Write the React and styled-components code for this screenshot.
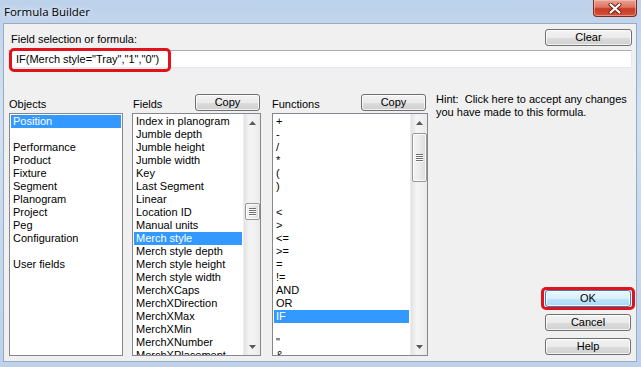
import React from 'react';
import styled, { createGlobalStyle } from 'styled-components';

const Global = createGlobalStyle`
  html, body { margin: 0; padding: 0; background: #c7d9ee; }
  body { width: 641px; height: 367px; overflow: hidden; }
  * { box-sizing: border-box; }
`;

const Window = styled.div`
  width: 641px;
  height: 367px;
  display: flex;
  flex-direction: column;
  padding: 0 4px 5px 3px;
  background: linear-gradient(180deg, #bcd1ea 0%, #d3e2f3 30%, #c6d9ee 60%, #bdd2ea 100%);
  font-family: "Liberation Sans", Arial, sans-serif;
  font-size: 11px;
  color: #000;
`;

const TitleBar = styled.div`
  height: 23px;
  flex: 0 0 23px;
  display: flex;
  align-items: flex-start;
  justify-content: space-between;
`;

const Title = styled.div`
  font-family: "Open Sans", "Noto Sans", sans-serif;
  font-size: 11.5px;
  line-height: 23px;
  padding-left: 1px;
  color: #000;
  text-shadow: 0 0 6px rgba(255, 255, 255, 0.9);
`;

const CloseBtn = styled.div`
  width: 44px;
  height: 17px;
  flex-shrink: 0;
  display: flex;
  align-items: center;
  justify-content: center;
  border: 1px solid #7e2b21;
  border-top: none;
  border-radius: 0 0 4px 4px;
  background: linear-gradient(180deg, #e9a293 0%, #dc7460 45%, #c73b24 55%, #d4533a 100%);
  box-shadow: inset 0 0 0 1px rgba(255, 220, 210, 0.45);
`;

const Client = styled.div`
  flex: 1;
  min-height: 0;
  overflow: hidden;
  display: flex;
  flex-direction: column;
  background: #f0f0f0;
  border: 1px solid #97abc4;
  padding: 5px 4px 5px 4px;
`;

const HeaderRow = styled.div`
  height: 17px;
  flex: 0 0 17px;
  display: flex;
  align-items: flex-end;
  justify-content: space-between;
`;

const Label = styled.div`
  line-height: 13px;
  padding-left: ${p => p.$pl || 0}px;
  white-space: nowrap;
`;

const Button = styled.div`
  width: ${p => p.$w || 86}px;
  height: 17px;
  flex-shrink: 0;
  margin-right: ${p => p.$mr || 0}px;
  display: flex;
  align-items: center;
  justify-content: center;
  border: 1px solid ${p => (p.$default ? '#3c7fb1' : '#707070')};
  border-radius: 3px;
  background: ${p =>
    p.$default
      ? 'linear-gradient(180deg, #eaf6fd 0%, #d9f0fc 50%, #bee6fd 51%, #a7d9f5 100%)'
      : 'linear-gradient(180deg, #f2f2f2 0%, #ebebeb 50%, #dddddd 51%, #cfcfcf 100%)'};
  box-shadow: inset 0 0 0 1px rgba(255, 255, 255, 0.75);
  line-height: 13px;
  position: relative;
`;

const Highlight = styled.div`
  position: absolute;
  left: ${p => p.$l}px;
  top: ${p => p.$t}px;
  width: ${p => p.$w}px;
  height: ${p => p.$h}px;
  border: 3px solid #e0121c;
  border-radius: 5px;
  pointer-events: none;
`;

const InputWrap = styled.div`
  position: relative;
  margin-top: 4px;
  flex: 0 0 auto;
`;

const TextInput = styled.div`
  height: 18px;
  background: #fff;
  border: 1px solid #e3e9ef;
  border-top-color: #abadb3;
  padding-left: 7px;
  line-height: 16px;
  white-space: pre;
`;

const Main = styled.div`
  flex: 1;
  margin-top: 26px;
  display: flex;
  min-height: 0;
`;

const Column = styled.div`
  width: ${p => (p.$w ? p.$w + 'px' : 'auto')};
  flex: ${p => (p.$w ? '0 0 auto' : '1')};
  margin-left: ${p => p.$ml}px;
  display: flex;
  flex-direction: column;
  min-height: 0;
`;

const ListBox = styled.div`
  margin-top: 2px;
  flex: 1;
  display: flex;
  background: #fff;
  border: 1px solid #828790;
  min-height: 0;
  overflow: hidden;
`;

const Items = styled.div`
  flex: 1;
  padding: 1px;
  overflow: hidden;
  min-width: 0;
`;

const Item = styled.div`
  height: 13px;
  line-height: 13px;
  padding-left: 2px;
  white-space: nowrap;
  background: ${p => (p.$sel ? '#3399ff' : 'transparent')};
  color: ${p => (p.$sel ? '#fff' : '#000')};
`;

const ScrollBar = styled.div`
  width: 17px;
  flex-shrink: 0;
  display: flex;
  flex-direction: column;
  background: linear-gradient(90deg, #e3e3e3 0%, #f4f4f4 35%, #f0f0f0 70%, #e9e9e9 100%);
  border-left: 1px solid #ededed;
`;

const Arrow = styled.div`
  height: 17px;
  flex: 0 0 17px;
  display: flex;
  align-items: center;
  justify-content: center;
`;

const Track = styled.div`
  flex: 1;
  display: flex;
  flex-direction: column;
  align-items: center;
`;

const Thumb = styled.div`
  width: 15px;
  margin-top: ${p => p.$top}px;
  height: ${p => p.$h}px;
  border: 1px solid #979797;
  border-radius: 2px;
  background: linear-gradient(90deg, #f4f4f4 0%, #ebebeb 50%, #dcdcdc 100%);
  box-shadow: inset 0 0 0 1px rgba(255, 255, 255, 0.8);
  display: flex;
  flex-direction: column;
  align-items: center;
  justify-content: center;
  gap: 1px;
`;

const Grip = styled.div`
  width: 7px;
  height: 1px;
  background: #6e6e6e;
  box-shadow: 0 1px 0 #fff;
`;

const Hint = styled.div`
  line-height: 13px;
  margin-top: -1px;
  white-space: nowrap;
`;

const ButtonStack = styled.div`
  margin-top: auto;
  display: flex;
  flex-direction: column;
  align-items: flex-end;
  gap: 7px;
  padding-bottom: 1px;
`;

const objects = ['Position', '', 'Performance', 'Product', 'Fixture', 'Segment', 'Planogram', 'Project', 'Peg', 'Configuration', '', 'User fields'];
const fields = ['Index in planogram', 'Jumble depth', 'Jumble height', 'Jumble width', 'Key', 'Last Segment', 'Linear', 'Location ID', 'Manual units', 'Merch style', 'Merch style depth', 'Merch style height', 'Merch style width', 'MerchXCaps', 'MerchXDirection', 'MerchXMax', 'MerchXMin', 'MerchXNumber', 'MerchXPlacement'];
const functions = ['+', '-', '/', '*', '(', ')', '', '<', '>', '<=', '>=', '=', '!=', 'AND', 'OR', 'IF', '', '"', '&'];

const ArrowIcon = ({ down }) => (
  <svg width="7" height="4" viewBox="0 0 7 4">
    <path d={down ? 'M0 0 L7 0 L3.5 4 Z' : 'M0 4 L7 4 L3.5 0 Z'} fill="#5a5a5a" />
  </svg>
);

const Scroll = ({ top, h }) => (
  <ScrollBar>
    <Arrow><ArrowIcon /></Arrow>
    <Track>
      <Thumb $top={top} $h={h}>
        <Grip /><Grip /><Grip /><Grip />
      </Thumb>
    </Track>
    <Arrow><ArrowIcon down /></Arrow>
  </ScrollBar>
);

const List = ({ items, selected, scroll }) => (
  <ListBox>
    <Items>
      {items.map((t, i) => (
        <Item key={i} $sel={t === selected}>{t}</Item>
      ))}
    </Items>
    {scroll && <Scroll top={scroll.top} h={scroll.h} />}
  </ListBox>
);

export default function App() {
  return (
    <>
      <Global />
      <Window>
        <TitleBar>
          <Title>Formula Builder</Title>
          <CloseBtn>
            <svg width="14" height="11" viewBox="0 0 14 11">
              <path d="M2.5 1.5 L11.5 9.5 M11.5 1.5 L2.5 9.5" stroke="#6b1f16" strokeWidth="4" strokeLinecap="round" />
              <path d="M2.5 1.5 L11.5 9.5 M11.5 1.5 L2.5 9.5" stroke="#fff" strokeWidth="2.2" strokeLinecap="round" />
            </svg>
          </CloseBtn>
        </TitleBar>
        <Client>
          <HeaderRow>
            <Label $pl={3}>Field selection or formula:</Label>
            <Button $w={87}>Clear</Button>
          </HeaderRow>
          <InputWrap>
            <TextInput>IF(Merch style="Tray","1","0")</TextInput>
            <Highlight $l={1} $t={-2} $w={162} $h={24} />
          </InputWrap>
          <Main>
            <Column $w={114} $ml={1}>
              <HeaderRow>
                <Label>Objects</Label>
              </HeaderRow>
              <List items={objects} selected="Position" />
            </Column>
            <Column $w={129} $ml={9}>
              <HeaderRow>
                <Label $pl={1}>Fields</Label>
                <Button $w={65} $mr={1}>Copy</Button>
              </HeaderRow>
              <List items={fields} selected="Merch style" scroll={{ top: 72, h: 17 }} />
            </Column>
            <Column $w={156} $ml={11}>
              <HeaderRow>
                <Label>Functions</Label>
                <Button $w={65} $mr={2}>Copy</Button>
              </HeaderRow>
              <List items={functions} selected="IF" scroll={{ top: 2, h: 49 }} />
            </Column>
            <Column $ml={8}>
              <Hint>
                Hint:&nbsp; Click here to accept any changes<br />
                you have made to this formula.
              </Hint>
              <ButtonStack>
                <Button $default $mr={1}>
                  OK
                  <Highlight $l={-5} $t={-4} $w={94} $h={23} />
                </Button>
                <Button $mr={1}>Cancel</Button>
                <Button $mr={1}>Help</Button>
              </ButtonStack>
            </Column>
          </Main>
        </Client>
      </Window>
    </>
  );
}
